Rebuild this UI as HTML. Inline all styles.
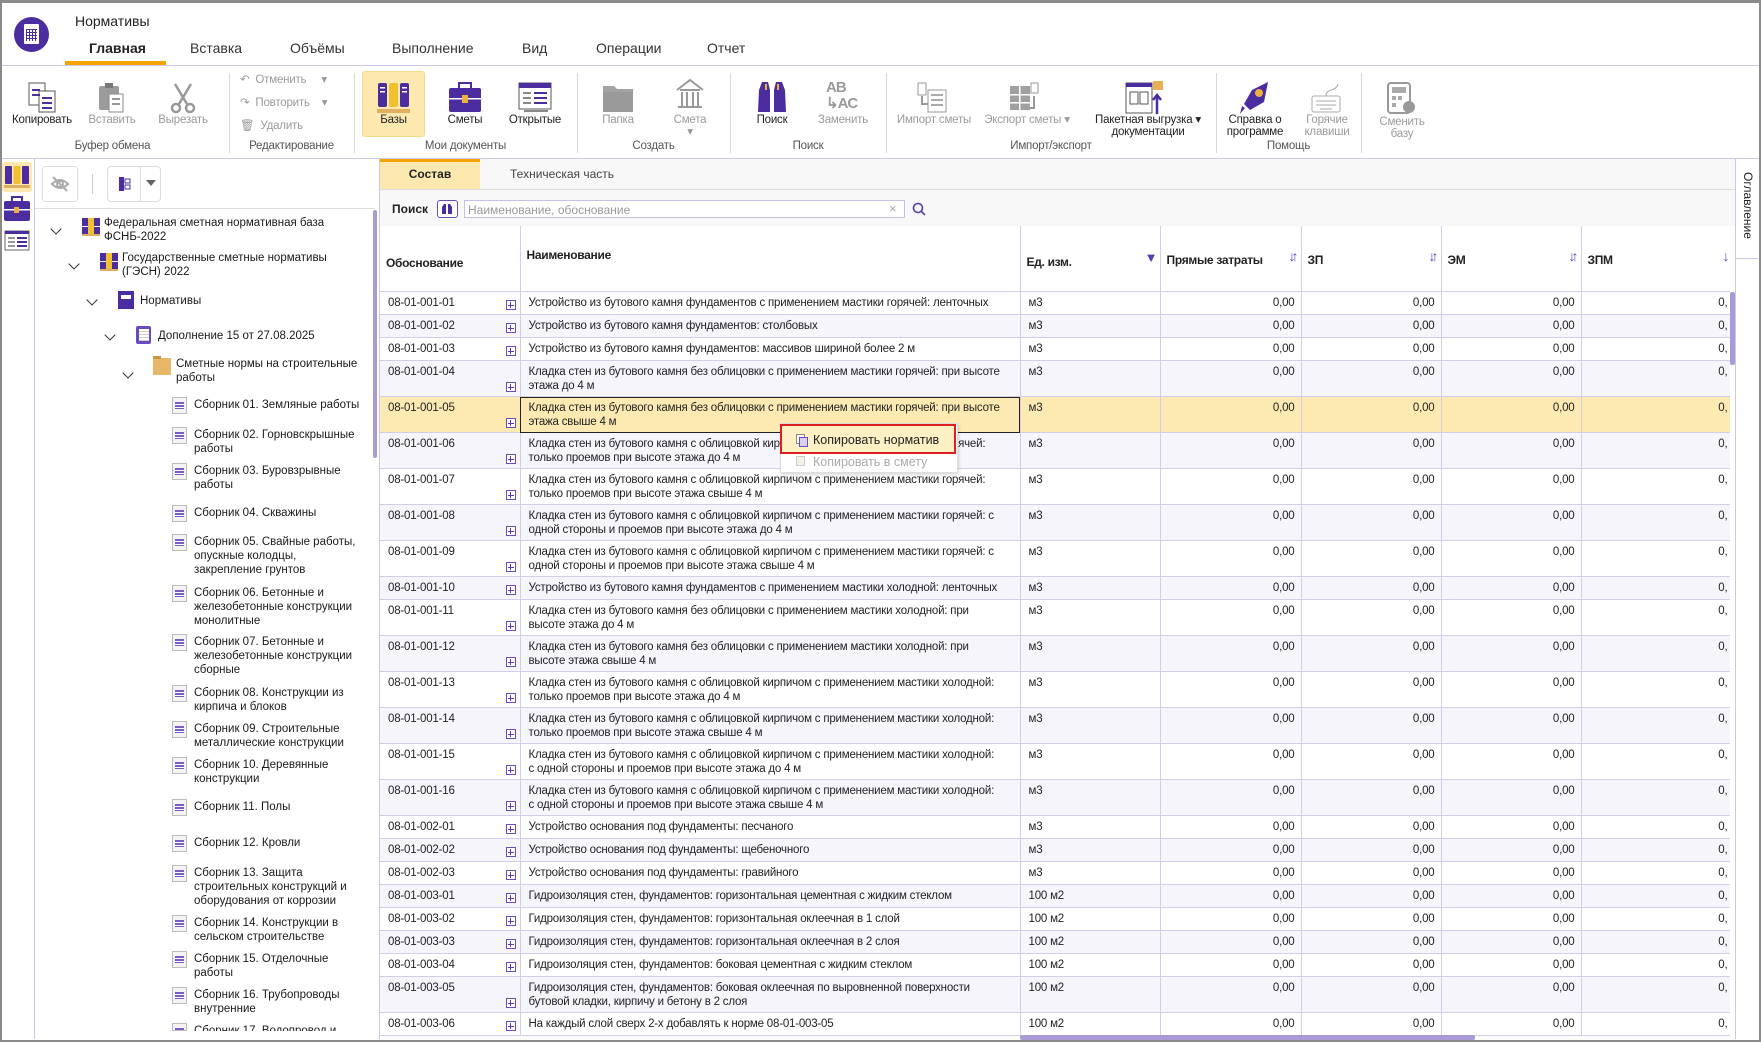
<!DOCTYPE html>
<html><head><meta charset="utf-8"><style>
*{box-sizing:border-box;margin:0;padding:0}
html,body{width:1761px;height:1042px;overflow:hidden}
body{background:#fff;font-family:"Liberation Sans",sans-serif;color:#222;position:relative}
.a{position:absolute}
.frame{left:0;top:0;width:1761px;height:1042px;border:2px solid #8a8a8a;border-top-width:3px;pointer-events:none;z-index:50}
.tab{top:40px;font-size:14px;color:#333}
.rl{font-size:11.5px;text-align:center;line-height:12px;letter-spacing:-.2px}
.dis{color:#9a9a9a}
.gl{top:140px;font-size:11.5px;color:#555;text-align:center;letter-spacing:-.2px}
.sep{top:73px;width:1px;height:80px;background:#d8d8e0}
.tr{font-size:11.5px;line-height:14px;color:#1a1a1a;white-space:nowrap}
.chev{width:8px;height:8px;border-right:1.6px solid #333;border-bottom:1.6px solid #333;transform:rotate(45deg)}
.ti{width:15px;height:17px;border:1px solid #bbb;background:#f4f4f4}
.ti:after{content:"";position:absolute;left:2px;top:4px;width:9px;height:7px;background:repeating-linear-gradient(#7a5cc8 0 2px,#fff 2px 3px)}
table{border-collapse:collapse;table-layout:fixed;font-size:11.5px;letter-spacing:-.2px}
td{border-right:1px solid #d4cde8;border-bottom:1.5px solid #d4cde8;vertical-align:top;padding:5px 6px 0 8px;line-height:13.5px;overflow:hidden;white-space:nowrap;position:relative}
td.n{white-space:normal}
td.r{text-align:right;padding-right:6px}
td.z{text-align:right;padding-right:12px}
tr.s td{height:23px}
tr.d td{height:36px}
tr:nth-child(even) td{background:#f6f5fc}
tr.sel td{background:#fdeab3}
.pl{position:absolute;right:4px;bottom:4px;width:10px;height:10px;border:1px solid #6a4cc0;background:#fff}
.pl:before{content:"";position:absolute;left:1px;top:3.5px;width:6px;height:1px;background:#5a3cb0}
.pl:after{content:"";position:absolute;left:3.5px;top:1px;width:1px;height:6px;background:#5a3cb0}
th{font-weight:bold;text-align:left;font-size:12px;border-right:1px solid #d4cde8;border-bottom:1.5px solid #d4cde8;padding-left:6px;height:65px;background:#fff;position:relative;letter-spacing:-.3px}
.sort{position:absolute;right:6px;top:22px;color:#5a3cb0;font-size:14px;font-weight:bold;letter-spacing:-4px}
</style></head><body>
<div class="a frame"></div>
<div class="a" style="left:14px;top:17px;width:35px;height:35px;border-radius:50%;background:#4b2d9f"></div>
<div class="a" style="left:24px;top:24px;width:15px;height:20px;background:#fff;border-radius:1px"></div>
<div class="a" style="left:26px;top:29px;width:11px;height:12px;background:repeating-linear-gradient(#4b2d9f 0 1px,transparent 1px 3px),repeating-linear-gradient(90deg,#4b2d9f 0 1px,transparent 1px 3px)"></div>
<div class="a" style="left:75px;top:13px;font-size:14px">Нормативы</div>
<div class="a tab" style="left:89px;font-weight:bold;color:#222">Главная</div>
<div class="a tab" style="left:190px">Вставка</div>
<div class="a tab" style="left:290px">Объёмы</div>
<div class="a tab" style="left:392px">Выполнение</div>
<div class="a tab" style="left:522px">Вид</div>
<div class="a tab" style="left:596px">Операции</div>
<div class="a tab" style="left:707px">Отчет</div>
<div class="a" style="left:65px;top:61px;width:101px;height:4px;background:#f5a300"></div>
<div class="a" style="left:0;top:65px;width:1761px;height:1px;background:#cfc8e2"></div>
<div class="a" style="left:0;top:158px;width:1761px;height:1px;background:#cfc8e2"></div>
<div class="a sep" style="left:229px"></div><div class="a sep" style="left:354px"></div><div class="a sep" style="left:577px"></div><div class="a sep" style="left:730px"></div><div class="a sep" style="left:886px"></div><div class="a sep" style="left:1216px"></div><div class="a sep" style="left:1361px"></div>
<svg class="a" style="left:27px;top:82px" width="32" height="32"><rect x="2" y="1" width="16" height="22" fill="#fff" stroke="#555"/><rect x="12" y="9" width="16" height="21" fill="#fff" stroke="#555"/><g fill="#4b2d9f"><rect x="5" y="7" width="8" height="2"/><rect x="5" y="12" width="8" height="2"/><rect x="15" y="15" width="10" height="2"/><rect x="15" y="20" width="10" height="2"/><rect x="15" y="25" width="10" height="2"/></g></svg>
<div class="a rl" style="left:5px;top:114px;width:74px">Копировать</div>
<svg class="a" style="left:96px;top:82px" width="32" height="32"><rect x="3" y="4" width="20" height="24" rx="2" fill="#9b9b9b"/><rect x="9" y="1" width="8" height="5" fill="#777"/><rect x="13" y="12" width="14" height="18" fill="#fff" stroke="#888"/><g fill="#999"><rect x="16" y="16" width="8" height="2"/><rect x="16" y="21" width="8" height="2"/></g></svg>
<div class="a rl dis" style="left:80px;top:114px;width:64px">Вставить</div>
<svg class="a" style="left:167px;top:82px" width="32" height="32" fill="none" stroke="#999" stroke-width="2.5"><path d="M8 2 L20 22 M24 2 L12 22"/><circle cx="9" cy="26" r="4"/><circle cx="23" cy="26" r="4"/></svg>
<div class="a rl dis" style="left:150px;top:114px;width:66px">Вырезать</div>
<div class="a rl dis" style="left:240px;top:74px;text-align:left">↶ &nbsp;Отменить &nbsp; &nbsp; ▾</div>
<div class="a rl dis" style="left:240px;top:97px;text-align:left">↷ &nbsp;Повторить &nbsp; &nbsp;▾</div>
<div class="a rl dis" style="left:240px;top:120px;text-align:left">🗑 &nbsp;Удалить</div>
<div class="a" style="left:362px;top:71px;width:63px;height:66px;background:#fde9b0;border:1px solid #f3d98a;border-radius:3px"></div>
<svg class="a" style="left:377px;top:81px" width="34" height="32"><rect x="1" y="2" width="9" height="24" rx="2" fill="#4b2d9f"/><rect x="12" y="2" width="9" height="24" rx="2" fill="#f0c030"/><rect x="23" y="2" width="9" height="24" rx="2" fill="#4b2d9f"/><g fill="#fff"><rect x="3" y="6" width="5" height="1.5"/><rect x="3" y="10" width="5" height="1.5"/><rect x="25" y="6" width="5" height="1.5"/><rect x="25" y="10" width="5" height="1.5"/></g><rect x="0" y="28" width="33" height="4" fill="#e0b060"/></svg>
<div class="a rl" style="left:362px;top:114px;width:63px">Базы</div>
<svg class="a" style="left:448px;top:81px" width="34" height="32"><rect x="11" y="2" width="12" height="6" fill="none" stroke="#4b2d9f" stroke-width="2"/><rect x="1" y="7" width="32" height="24" rx="2" fill="#4b2d9f"/><rect x="1" y="17" width="32" height="1.5" fill="#fff"/><rect x="14" y="14" width="6" height="8" fill="#f0b040"/></svg>
<div class="a rl" style="left:434px;top:114px;width:62px">Сметы</div>
<svg class="a" style="left:518px;top:82px" width="34" height="32"><rect x="1" y="1" width="32" height="26" fill="#fff" stroke="#555"/><rect x="1" y="1" width="32" height="5" fill="#4b2d9f"/><g fill="#888"><rect x="5" y="10" width="8" height="2"/><rect x="5" y="15" width="8" height="2"/><rect x="5" y="20" width="8" height="2"/></g><g fill="#4b2d9f"><rect x="16" y="10" width="13" height="2"/><rect x="16" y="15" width="13" height="2"/><rect x="16" y="20" width="13" height="2"/></g><rect x="6" y="28" width="24" height="2" fill="#888"/></svg>
<div class="a rl" style="left:500px;top:114px;width:70px">Открытые</div>
<div class="a gl" style="left:354px;width:223px">Мои документы</div>
<svg class="a" style="left:602px;top:82px" width="32" height="32"><path d="M1 4h11l3 3h16v23H1z" fill="#a3a3a3"/><rect x="1" y="10" width="30" height="20" fill="#9a9a9a"/></svg>
<div class="a rl dis" style="left:590px;top:114px;width:56px">Папка</div>
<svg class="a" style="left:674px;top:78px" width="32" height="32" fill="none" stroke="#999" stroke-width="2"><path d="M3 12 L16 2 L29 12 M6 12h20M8 14v14M13 14v14M19 14v14M24 14v14M4 29h24"/></svg>
<div class="a rl dis" style="left:662px;top:114px;width:56px">Смета<br>▾</div>
<div class="a gl" style="left:577px;width:153px">Создать</div>
<svg class="a" style="left:756px;top:80px" width="32" height="34"><path d="M2 32 L3 10 L6 2 h6 l2 8 v22z M18 32 V10 l2-8h6l3 8 1 22z" fill="#4b2d9f"/><rect x="9" y="4" width="2" height="6" fill="#f0b040"/><rect x="21" y="4" width="2" height="6" fill="#f0b040"/></svg>
<div class="a rl" style="left:742px;top:114px;width:60px">Поиск</div>
<div class="a" style="left:826px;top:80px;font-size:15px;font-weight:bold;color:#9a9a9a;line-height:16px;letter-spacing:-1px">AB<br>↳AC</div>
<div class="a rl dis" style="left:812px;top:114px;width:62px">Заменить</div>
<div class="a gl" style="left:730px;width:156px">Поиск</div>
<svg class="a" style="left:916px;top:82px" width="32" height="32"><rect x="2" y="1" width="8" height="12" fill="#fff" stroke="#999"/><rect x="12" y="8" width="18" height="22" fill="#fff" stroke="#999"/><g fill="#aaa"><rect x="15" y="12" width="12" height="2"/><rect x="15" y="17" width="12" height="2"/><rect x="15" y="22" width="12" height="2"/></g><path d="M6 14v8h6" stroke="#999" stroke-width="2" fill="none"/></svg>
<div class="a rl dis" style="left:893px;top:114px;width:82px">Импорт сметы</div>
<svg class="a" style="left:1008px;top:82px" width="32" height="32"><rect x="2" y="4" width="20" height="24" fill="#a0a0a0"/><g fill="#fff"><rect x="11" y="4" width="1.5" height="24"/><rect x="2" y="12" width="20" height="1.5"/><rect x="2" y="20" width="20" height="1.5"/></g><rect x="23" y="1" width="7" height="10" fill="#fff" stroke="#999"/><path d="M26 14v12h-4" stroke="#999" stroke-width="2" fill="none"/></svg>
<div class="a rl dis" style="left:978px;top:114px;width:98px">Экспорт сметы ▾</div>
<svg class="a" style="left:1125px;top:80px" width="40" height="36"><rect x="1" y="3" width="26" height="30" fill="#fff" stroke="#555"/><rect x="1" y="3" width="26" height="4" fill="#4b2d9f"/><rect x="5" y="12" width="8" height="12" fill="#fff" stroke="#555"/><rect x="15" y="12" width="8" height="12" fill="#fff" stroke="#555"/><rect x="28" y="1" width="10" height="9" fill="#e8b050"/><path d="M32 34V16 M28 20l4-5 4 5" stroke="#4b2d9f" stroke-width="2.5" fill="none"/></svg>
<div class="a rl" style="left:1088px;top:114px;width:120px">Пакетная выгрузка ▾<br>документации</div>
<div class="a gl" style="left:886px;width:330px">Импорт/экспорт</div>
<svg class="a" style="left:1238px;top:80px" width="34" height="36"><path d="M30 2 L14 10 L6 24 L12 30 L26 22 Z" fill="#4b2d9f"/><circle cx="21" cy="13" r="4" fill="#f0b040"/><path d="M7 28 L2 34 L4 26Z" fill="#4b2d9f"/></svg>
<div class="a rl" style="left:1218px;top:114px;width:74px">Справка о<br>программе</div>
<svg class="a" style="left:1310px;top:82px" width="32" height="32" fill="none" stroke="#aaa"><rect x="2" y="14" width="28" height="16" rx="2"/><path d="M6 19h20M6 23h20M10 27h12M16 14 C16 6 26 10 28 2"/></svg>
<div class="a rl dis" style="left:1296px;top:114px;width:62px">Горячие<br>клавиши</div>
<div class="a gl" style="left:1216px;width:145px">Помощь</div>
<svg class="a" style="left:1386px;top:82px" width="32" height="34"><rect x="2" y="1" width="22" height="30" rx="3" fill="#fff" stroke="#999" stroke-width="2"/><rect x="6" y="5" width="14" height="6" fill="#aaa"/><g fill="#aaa"><rect x="6" y="14" width="4" height="4"/><rect x="12" y="14" width="4" height="4"/><rect x="6" y="21" width="4" height="4"/></g><circle cx="23" cy="25" r="6" fill="#999"/></svg>
<div class="a rl dis" style="left:1371px;top:116px;width:62px">Сменить<br>базу</div>
<div class="a gl" style="left:5px;width:215px">Буфер обмена</div>
<div class="a gl" style="left:229px;width:125px">Редактирование</div>

<div class="a" style="left:34px;top:159px;width:1px;height:880px;background:#cfc8e2"></div>
<div class="a" style="left:2px;top:162px;width:30px;height:30px;background:#fde9b0;border-radius:3px"></div>
<svg class="a" style="left:4px;top:165px" width="26" height="24"><rect x="1" y="1" width="7" height="18" rx="1" fill="#4b2d9f"/><rect x="9.5" y="1" width="7" height="18" rx="1" fill="#f0c030"/><rect x="18" y="1" width="7" height="18" rx="1" fill="#4b2d9f"/><rect x="0" y="20" width="26" height="3" fill="#e0b060"/></svg>
<svg class="a" style="left:4px;top:196px" width="26" height="26"><rect x="8" y="1" width="10" height="5" fill="none" stroke="#4b2d9f" stroke-width="2"/><rect x="0" y="5" width="26" height="20" rx="2" fill="#4b2d9f"/><rect x="0" y="13" width="26" height="1.5" fill="#fff"/><rect x="10" y="11" width="5" height="6" fill="#f0b040"/></svg>
<svg class="a" style="left:4px;top:230px" width="26" height="24"><rect x="1" y="1" width="24" height="19" fill="#fff" stroke="#666"/><rect x="1" y="1" width="24" height="3" fill="#4b2d9f"/><g fill="#4b2d9f"><rect x="13" y="7" width="10" height="2"/><rect x="13" y="11" width="10" height="2"/><rect x="13" y="15" width="10" height="2"/></g><g fill="#999"><rect x="4" y="7" width="7" height="2"/><rect x="4" y="11" width="7" height="2"/><rect x="4" y="15" width="7" height="2"/></g></svg>

<div class="a" style="left:42px;top:166px;width:36px;height:36px;border:1px solid #ddd;border-radius:4px"></div>
<svg class="a" style="left:50px;top:174px" width="20" height="20" fill="none" stroke="#aaa" stroke-width="2"><path d="M2 10 Q10 2 18 10 Q10 18 2 10Z"/><circle cx="10" cy="10" r="3"/><path d="M3 3L17 17"/></svg>
<div class="a" style="left:92px;top:174px;width:1px;height:20px;background:#ccc"></div>
<div class="a" style="left:107px;top:166px;width:54px;height:36px;border:1px solid #ddd;border-radius:4px"></div>
<div class="a" style="left:140px;top:166px;width:1px;height:36px;background:#ddd"></div>
<svg class="a" style="left:118px;top:176px" width="14" height="16"><rect x="1" y="1" width="5" height="14" fill="#4b2d9f"/><rect x="7" y="3" width="5" height="4" fill="none" stroke="#4b2d9f"/><rect x="7" y="9" width="5" height="4" fill="none" stroke="#4b2d9f"/></svg>
<div class="a" style="left:146px;top:180px;width:0;height:0;border:5px solid transparent;border-top:6px solid #666"></div>
<div class="a" style="left:35px;top:208px;width:340px;height:1px;background:#ddd"></div>
<div class="a" style="left:373px;top:210px;width:4px;height:248px;background:#a99bd6;border-radius:2px"></div>
<div class="a" style="left:35px;top:209px;width:338px;height:822px;overflow:hidden">
<div style="position:absolute;top:-209px;left:-35px;width:373px;height:1031px">
<div class="a chev" style="left:52px;top:225px"></div>
<svg class="a" style="left:82px;top:218px" width="18" height="18"><rect x="0" y="0" width="18" height="8" fill="#4b2d9f"/><rect x="0" y="9" width="18" height="7" fill="#4b2d9f"/><rect x="6" y="0" width="6" height="16" fill="#f0c030"/><rect x="0" y="16" width="18" height="2" fill="#e0b060"/></svg>
<div class="a tr" style="left:104px;top:216px">Федеральная сметная нормативная база<br>ФСНБ-2022</div>
<div class="a chev" style="left:70px;top:260px"></div>
<svg class="a" style="left:100px;top:253px" width="18" height="18"><rect x="0" y="0" width="18" height="8" fill="#4b2d9f"/><rect x="0" y="9" width="18" height="7" fill="#4b2d9f"/><rect x="6" y="0" width="6" height="16" fill="#f0c030"/><rect x="0" y="16" width="18" height="2" fill="#e0b060"/></svg>
<div class="a tr" style="left:122px;top:251px">Государственные сметные нормативы<br>(ГЭСН) 2022</div>
<div class="a chev" style="left:88px;top:296px"></div>
<div class="a" style="left:118px;top:291px;width:16px;height:18px;background:#4b2d9f"></div><div class="a" style="left:121px;top:295px;width:10px;height:4px;background:#fff"></div>
<div class="a tr" style="left:140px;top:294px">Нормативы</div>
<div class="a chev" style="left:106px;top:331px"></div>
<div class="a" style="left:136px;top:326px;width:15px;height:18px;background:#6a4cc0;border-radius:2px"></div><div class="a" style="left:139px;top:329px;width:10px;height:12px;background:repeating-linear-gradient(#fff 0 2px,#ccc 2px 3px)"></div>
<div class="a tr" style="left:158px;top:329px">Дополнение 15 от 27.08.2025</div>
<div class="a chev" style="left:124px;top:369px"></div>
<div class="a" style="left:153px;top:358px;width:18px;height:17px;background:#e8b86a"></div><div class="a" style="left:153px;top:356px;width:8px;height:3px;background:#c89840"></div>
<div class="a tr" style="left:176px;top:357px">Сметные нормы на строительные<br>работы</div>
<div class="a ti" style="left:172px;top:397px"></div><div class="a tr" style="left:194px;top:398px">Сборник 01. Земляные работы</div>
<div class="a ti" style="left:172px;top:427px"></div><div class="a tr" style="left:194px;top:428px">Сборник 02. Горновскрышные<br>работы</div>
<div class="a ti" style="left:172px;top:463px"></div><div class="a tr" style="left:194px;top:464px">Сборник 03. Буровзрывные<br>работы</div>
<div class="a ti" style="left:172px;top:505px"></div><div class="a tr" style="left:194px;top:506px">Сборник 04. Скважины</div>
<div class="a ti" style="left:172px;top:534px"></div><div class="a tr" style="left:194px;top:535px">Сборник 05. Свайные работы,<br>опускные колодцы,<br>закрепление грунтов</div>
<div class="a ti" style="left:172px;top:585px"></div><div class="a tr" style="left:194px;top:586px">Сборник 06. Бетонные и<br>железобетонные конструкции<br>монолитные</div>
<div class="a ti" style="left:172px;top:634px"></div><div class="a tr" style="left:194px;top:635px">Сборник 07. Бетонные и<br>железобетонные конструкции<br>сборные</div>
<div class="a ti" style="left:172px;top:685px"></div><div class="a tr" style="left:194px;top:686px">Сборник 08. Конструкции из<br>кирпича и блоков</div>
<div class="a ti" style="left:172px;top:721px"></div><div class="a tr" style="left:194px;top:722px">Сборник 09. Строительные<br>металлические конструкции</div>
<div class="a ti" style="left:172px;top:757px"></div><div class="a tr" style="left:194px;top:758px">Сборник 10. Деревянные<br>конструкции</div>
<div class="a ti" style="left:172px;top:799px"></div><div class="a tr" style="left:194px;top:800px">Сборник 11. Полы</div>
<div class="a ti" style="left:172px;top:835px"></div><div class="a tr" style="left:194px;top:836px">Сборник 12. Кровли</div>
<div class="a ti" style="left:172px;top:865px"></div><div class="a tr" style="left:194px;top:866px">Сборник 13. Защита<br>строительных конструкций и<br>оборудования от коррозии</div>
<div class="a ti" style="left:172px;top:915px"></div><div class="a tr" style="left:194px;top:916px">Сборник 14. Конструкции в<br>сельском строительстве</div>
<div class="a ti" style="left:172px;top:951px"></div><div class="a tr" style="left:194px;top:952px">Сборник 15. Отделочные<br>работы</div>
<div class="a ti" style="left:172px;top:987px"></div><div class="a tr" style="left:194px;top:988px">Сборник 16. Трубопроводы<br>внутренние</div>
<div class="a ti" style="left:172px;top:1023px;height:8px;overflow:hidden"></div><div class="a tr" style="left:194px;top:1024px;height:7px;overflow:hidden">Сборник 17. Водопровод и</div>
</div></div>

<div class="a" style="left:379px;top:159px;width:1px;height:880px;background:#cfc8e2"></div>
<div class="a" style="left:380px;top:159px;width:1355px;height:67px;background:#f8f8f8"></div>
<div class="a" style="left:380px;top:159px;width:100px;height:30px;background:#fde9b0;border-top:3px solid #f5a300"></div>
<div class="a" style="left:380px;top:167px;width:100px;text-align:center;font-size:12px;font-weight:bold">Состав</div>
<div class="a" style="left:510px;top:167px;font-size:12px;color:#444">Техническая часть</div>
<div class="a" style="left:380px;top:189px;width:1355px;height:1px;background:#ddd"></div>
<div class="a" style="left:392px;top:202px;font-size:12px;font-weight:bold">Поиск</div>
<div class="a" style="left:437px;top:200px;width:21px;height:18px;border:1px solid #6a4cc0;border-radius:3px;background:#fff"></div>
<svg class="a" style="left:441px;top:203px" width="13" height="12"><path d="M1 11V4l2-3h2v10zM7 11V1h2l2 3v7z" fill="#4b2d9f"/></svg>
<div class="a" style="left:464px;top:200px;width:441px;height:18px;border:1px solid #c9bfe6;background:#fff;font-size:12px;color:#999;padding:2px 3px">Наименование, обоснование</div>
<div class="a" style="left:889px;top:201px;font-size:13px;color:#aaa">×</div>
<svg class="a" style="left:912px;top:202px" width="14" height="14" fill="none" stroke="#5a3cb0" stroke-width="1.6"><circle cx="6" cy="6" r="4.5"/><path d="M9.5 9.5L13 13"/></svg>
<div class="a" style="left:1735px;top:159px;width:1px;height:880px;background:#cfc8e2"></div>
<div class="a" style="left:1736px;top:258px;width:22px;height:1px;background:#cfc8e2"></div>
<div class="a" style="left:1741px;top:172px;font-size:12px;writing-mode:vertical-rl">Оглавление</div>

<div class="a" style="left:380px;top:226px;width:1350px;height:810px;overflow:hidden">
<table style="width:1360px">
<colgroup><col style="width:140px"><col style="width:500px"><col style="width:140px"><col style="width:141px"><col style="width:140px"><col style="width:140px"><col style="width:159px"></colgroup>
<tr><th style="padding-top:10px">Обоснование</th><th style="vertical-align:middle;padding-bottom:6px">Наименование</th><th style="padding-top:8px">Ед. изм.<span class="sort" style="font-size:13px;top:24px">▼</span></th><th style="padding-top:4px">Прямые затраты<span class="sort">↓↑</span></th><th style="padding-top:4px">ЗП<span class="sort">↓↑</span></th><th style="padding-top:4px">ЭМ<span class="sort">↓↑</span></th><th style="padding-top:4px">ЗПМ<span class="sort" style="right:14px">↓</span></th></tr>
</table>
<table style="width:1360px">
<colgroup><col style="width:140px"><col style="width:500px"><col style="width:140px"><col style="width:141px"><col style="width:140px"><col style="width:140px"><col style="width:159px"></colgroup>
<tr class="s"><td>08-01-001-01<i class="pl"></i></td><td>Устройство из бутового камня фундаментов с применением мастики горячей: ленточных</td><td>м3</td><td class="r">0,00</td><td class="r">0,00</td><td class="r">0,00</td><td class="z">0,</td></tr>
<tr class="s"><td>08-01-001-02<i class="pl"></i></td><td>Устройство из бутового камня фундаментов: столбовых</td><td>м3</td><td class="r">0,00</td><td class="r">0,00</td><td class="r">0,00</td><td class="z">0,</td></tr>
<tr class="s"><td>08-01-001-03<i class="pl"></i></td><td>Устройство из бутового камня фундаментов: массивов шириной более 2 м</td><td>м3</td><td class="r">0,00</td><td class="r">0,00</td><td class="r">0,00</td><td class="z">0,</td></tr>
<tr class="d"><td>08-01-001-04<i class="pl"></i></td><td class="n">Кладка стен из бутового камня без облицовки с применением мастики горячей: при высоте<br>этажа до 4 м</td><td>м3</td><td class="r">0,00</td><td class="r">0,00</td><td class="r">0,00</td><td class="z">0,</td></tr>
<tr class="d sel"><td>08-01-001-05<i class="pl"></i></td><td class="n" style="outline:1.5px solid #222;outline-offset:-1.5px">Кладка стен из бутового камня без облицовки с применением мастики горячей: при высоте<br>этажа свыше 4 м</td><td>м3</td><td class="r">0,00</td><td class="r">0,00</td><td class="r">0,00</td><td class="z">0,</td></tr>
<tr class="d"><td>08-01-001-06<i class="pl"></i></td><td class="n">Кладка стен из бутового камня с облицовкой кирпичом с применением мастики горячей:<br>только проемов при высоте этажа до 4 м</td><td>м3</td><td class="r">0,00</td><td class="r">0,00</td><td class="r">0,00</td><td class="z">0,</td></tr>
<tr class="d"><td>08-01-001-07<i class="pl"></i></td><td class="n">Кладка стен из бутового камня с облицовкой кирпичом с применением мастики горячей:<br>только проемов при высоте этажа свыше 4 м</td><td>м3</td><td class="r">0,00</td><td class="r">0,00</td><td class="r">0,00</td><td class="z">0,</td></tr>
<tr class="d"><td>08-01-001-08<i class="pl"></i></td><td class="n">Кладка стен из бутового камня с облицовкой кирпичом с применением мастики горячей: с<br>одной стороны и проемов при высоте этажа до 4 м</td><td>м3</td><td class="r">0,00</td><td class="r">0,00</td><td class="r">0,00</td><td class="z">0,</td></tr>
<tr class="d"><td>08-01-001-09<i class="pl"></i></td><td class="n">Кладка стен из бутового камня с облицовкой кирпичом с применением мастики горячей: с<br>одной стороны и проемов при высоте этажа свыше 4 м</td><td>м3</td><td class="r">0,00</td><td class="r">0,00</td><td class="r">0,00</td><td class="z">0,</td></tr>
<tr class="s"><td>08-01-001-10<i class="pl"></i></td><td>Устройство из бутового камня фундаментов с применением мастики холодной: ленточных</td><td>м3</td><td class="r">0,00</td><td class="r">0,00</td><td class="r">0,00</td><td class="z">0,</td></tr>
<tr class="d"><td>08-01-001-11<i class="pl"></i></td><td class="n">Кладка стен из бутового камня без облицовки с применением мастики холодной: при<br>высоте этажа до 4 м</td><td>м3</td><td class="r">0,00</td><td class="r">0,00</td><td class="r">0,00</td><td class="z">0,</td></tr>
<tr class="d"><td>08-01-001-12<i class="pl"></i></td><td class="n">Кладка стен из бутового камня без облицовки с применением мастики холодной: при<br>высоте этажа свыше 4 м</td><td>м3</td><td class="r">0,00</td><td class="r">0,00</td><td class="r">0,00</td><td class="z">0,</td></tr>
<tr class="d"><td>08-01-001-13<i class="pl"></i></td><td class="n">Кладка стен из бутового камня с облицовкой кирпичом с применением мастики холодной:<br>только проемов при высоте этажа до 4 м</td><td>м3</td><td class="r">0,00</td><td class="r">0,00</td><td class="r">0,00</td><td class="z">0,</td></tr>
<tr class="d"><td>08-01-001-14<i class="pl"></i></td><td class="n">Кладка стен из бутового камня с облицовкой кирпичом с применением мастики холодной:<br>только проемов при высоте этажа свыше 4 м</td><td>м3</td><td class="r">0,00</td><td class="r">0,00</td><td class="r">0,00</td><td class="z">0,</td></tr>
<tr class="d"><td>08-01-001-15<i class="pl"></i></td><td class="n">Кладка стен из бутового камня с облицовкой кирпичом с применением мастики холодной:<br>с одной стороны и проемов при высоте этажа до 4 м</td><td>м3</td><td class="r">0,00</td><td class="r">0,00</td><td class="r">0,00</td><td class="z">0,</td></tr>
<tr class="d"><td>08-01-001-16<i class="pl"></i></td><td class="n">Кладка стен из бутового камня с облицовкой кирпичом с применением мастики холодной:<br>с одной стороны и проемов при высоте этажа свыше 4 м</td><td>м3</td><td class="r">0,00</td><td class="r">0,00</td><td class="r">0,00</td><td class="z">0,</td></tr>
<tr class="s"><td>08-01-002-01<i class="pl"></i></td><td>Устройство основания под фундаменты: песчаного</td><td>м3</td><td class="r">0,00</td><td class="r">0,00</td><td class="r">0,00</td><td class="z">0,</td></tr>
<tr class="s"><td>08-01-002-02<i class="pl"></i></td><td>Устройство основания под фундаменты: щебеночного</td><td>м3</td><td class="r">0,00</td><td class="r">0,00</td><td class="r">0,00</td><td class="z">0,</td></tr>
<tr class="s"><td>08-01-002-03<i class="pl"></i></td><td>Устройство основания под фундаменты: гравийного</td><td>м3</td><td class="r">0,00</td><td class="r">0,00</td><td class="r">0,00</td><td class="z">0,</td></tr>
<tr class="s"><td>08-01-003-01<i class="pl"></i></td><td>Гидроизоляция стен, фундаментов: горизонтальная цементная с жидким стеклом</td><td>100 м2</td><td class="r">0,00</td><td class="r">0,00</td><td class="r">0,00</td><td class="z">0,</td></tr>
<tr class="s"><td>08-01-003-02<i class="pl"></i></td><td>Гидроизоляция стен, фундаментов: горизонтальная оклеечная в 1 слой</td><td>100 м2</td><td class="r">0,00</td><td class="r">0,00</td><td class="r">0,00</td><td class="z">0,</td></tr>
<tr class="s"><td>08-01-003-03<i class="pl"></i></td><td>Гидроизоляция стен, фундаментов: горизонтальная оклеечная в 2 слоя</td><td>100 м2</td><td class="r">0,00</td><td class="r">0,00</td><td class="r">0,00</td><td class="z">0,</td></tr>
<tr class="s"><td>08-01-003-04<i class="pl"></i></td><td>Гидроизоляция стен, фундаментов: боковая цементная с жидким стеклом</td><td>100 м2</td><td class="r">0,00</td><td class="r">0,00</td><td class="r">0,00</td><td class="z">0,</td></tr>
<tr class="d"><td>08-01-003-05<i class="pl"></i></td><td class="n">Гидроизоляция стен, фундаментов: боковая оклеечная по выровненной поверхности<br>бутовой кладки, кирпичу и бетону в 2 слоя</td><td>100 м2</td><td class="r">0,00</td><td class="r">0,00</td><td class="r">0,00</td><td class="z">0,</td></tr>
<tr class="s"><td>08-01-003-06<i class="pl"></i></td><td>На каждый слой сверх 2-х добавлять к норме 08-01-003-05</td><td>100 м2</td><td class="r">0,00</td><td class="r">0,00</td><td class="r">0,00</td><td class="z">0,</td></tr>
</table>
</div>
<div class="a" style="left:1730px;top:292px;width:5px;height:73px;background:#a99bd6;border-radius:2px"></div>
<div class="a" style="left:1020px;top:1035px;width:455px;height:5px;background:#a99bd6;border-radius:2px"></div>

<div class="a" style="left:780px;top:423px;width:178px;height:50px;background:#fff;border:1px solid #ddd;box-shadow:1px 2px 3px rgba(0,0,0,.15)"></div>
<div class="a" style="left:780px;top:424px;width:176px;height:30px;border:2px solid #e02020;background:#fdf0c4"></div>
<div class="a" style="left:796px;top:434px;width:9px;height:10px;border:1px solid #888;background:#fff"></div><div class="a" style="left:799px;top:437px;width:9px;height:10px;border:1px solid #6a4cc0;background:#d8d0f0"></div>
<div class="a" style="left:813px;top:433px;font-size:12.5px;color:#222">Копировать норматив</div>
<div class="a" style="left:796px;top:456px;width:9px;height:10px;border:1px solid #ccc;background:#f4f0e4"></div>
<div class="a" style="left:813px;top:455px;font-size:12.5px;color:#aaa">Копировать в смету</div>
</body></html>
